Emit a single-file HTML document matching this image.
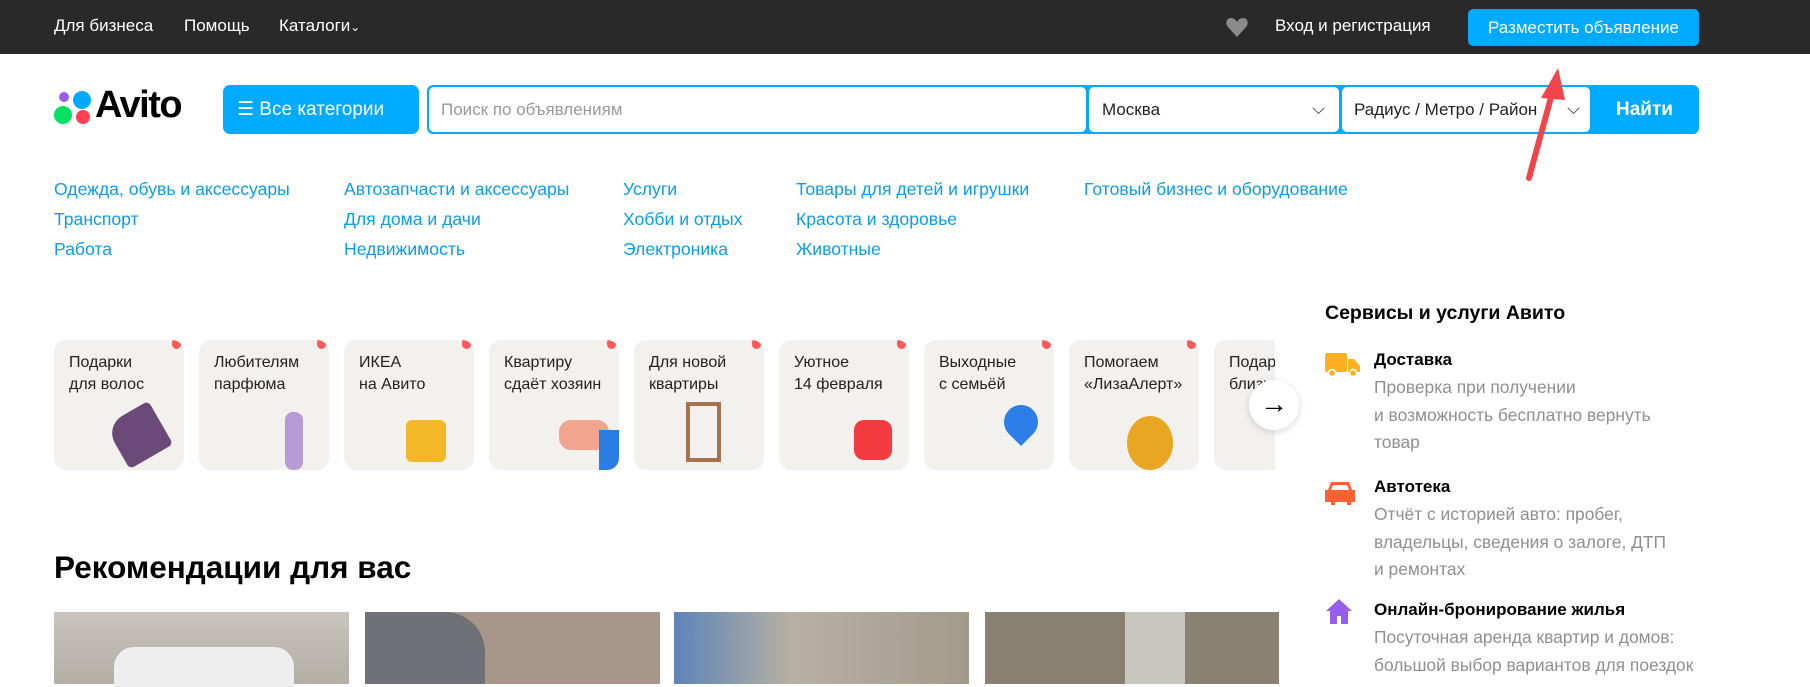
<!DOCTYPE html>
<html><head><meta charset="utf-8"><style>
*{margin:0;padding:0;box-sizing:border-box}
body{width:1810px;height:684px;overflow:hidden;background:#fff;font-family:"Liberation Sans",Arial,sans-serif;position:relative}
.a{position:absolute;white-space:nowrap}
.top{position:absolute;left:0;top:0;width:1810px;height:54px;background:#292929}
.top .a{color:#fff;font-size:17px;top:16px}
.btn{background:#00aaff;color:#fff;border-radius:5px}
.cat{color:#0a9cf0;font-size:17.6px}
.card{position:absolute;top:340px;width:130px;height:130px;background:#f2f1ee;border-radius:12px;overflow:hidden}
.card span{position:absolute;left:15px;top:12px;font-size:16px;line-height:22px;color:#222;white-space:nowrap}
.card i{position:absolute;right:3px;top:-2px;width:9px;height:11px;border-radius:5px;background:#ff5a5a}
.g{color:#8f8f8f;font-size:17.4px;line-height:27.5px}
.h{font-weight:bold;font-size:17px;color:#000}
.ph{position:absolute;top:612px;height:72px;width:295px}
</style></head><body>
<div class="top">
<div class="a" style="left:54px">Для бизнеса</div>
<div class="a" style="left:184px">Помощь</div>
<div class="a" style="left:279px">Каталоги<span style="font-size:12px">⌄</span></div>
<svg class="a" style="left:1225px;top:16px" width="24" height="22" viewBox="0 0 24 22"><path d="M12 21 3 11C0 8 1 2 6 2c3 0 5 2 6 4 1-2 3-4 6-4 5 0 6 6 3 9z" fill="#8a8a8a"/></svg>
<div class="a" style="left:1275px">Вход и регистрация</div>
<div class="a btn" style="left:1468px;top:9px;width:231px;height:37px;line-height:37px;text-align:center;font-size:17px">Разместить объявление</div>
</div>
<svg class="a" style="left:54px;top:89px" width="38" height="36"><circle cx="9" cy="26" r="9" fill="#04e061"/><circle cx="28" cy="11" r="9" fill="#0af"/><circle cx="29" cy="28" r="7" fill="#ff4053"/><circle cx="10" cy="8" r="5" fill="#965eeb"/></svg>
<div class="a" style="left:95px;top:84px;font-size:38px;font-weight:bold;letter-spacing:-1.5px;color:#000">Avito</div>
<div class="a btn" style="left:223px;top:85px;width:196px;height:49px;border-radius:7px;line-height:49px;font-size:19px;padding-left:14px">☰ Все категории</div>
<div class="a" style="left:427px;top:85px;width:1272px;height:49px;background:#00aaff;border-radius:6px"></div>
<div class="a" style="left:429px;top:87px;width:657px;height:45px;background:#fff;border-radius:5px;color:#999;font-size:17px;line-height:45px;padding-left:12px">Поиск по объявлениям</div>
<div class="a" style="left:1089px;top:87px;width:250px;height:45px;background:#fff;border-radius:5px;color:#222;font-size:17px;line-height:45px;padding-left:13px">Москва<span style="position:absolute;right:14px;top:-1px">⌵</span></div>
<div class="a" style="left:1342px;top:87px;width:248px;height:45px;background:#fff;border-radius:5px;color:#222;font-size:17px;line-height:45px;padding-left:12px;overflow:hidden">Радиус / Метро / Район<span style="position:absolute;right:10px;top:-1px;background:#fff;padding-left:4px">⌵</span></div>
<div class="a" style="left:1590px;top:85px;width:109px;height:49px;color:#fff;font-size:19px;font-weight:bold;line-height:49px;text-align:center">Найти</div>
<div class="a cat" style="left:54px;top:179px">Одежда, обувь и аксессуары</div>
<div class="a cat" style="left:54px;top:209px">Транспорт</div>
<div class="a cat" style="left:54px;top:239px">Работа</div>
<div class="a cat" style="left:344px;top:179px">Автозапчасти и аксессуары</div>
<div class="a cat" style="left:344px;top:209px">Для дома и дачи</div>
<div class="a cat" style="left:344px;top:239px">Недвижимость</div>
<div class="a cat" style="left:623px;top:179px">Услуги</div>
<div class="a cat" style="left:623px;top:209px">Хобби и отдых</div>
<div class="a cat" style="left:623px;top:239px">Электроника</div>
<div class="a cat" style="left:796px;top:179px">Товары для детей и игрушки</div>
<div class="a cat" style="left:796px;top:209px">Красота и здоровье</div>
<div class="a cat" style="left:796px;top:239px">Животные</div>
<div class="a cat" style="left:1084px;top:179px">Готовый бизнес и оборудование</div>
<svg class="a" style="left:1515px;top:60px" width="60" height="125"><path d="M14 118 L38 30" stroke="#f0464b" stroke-width="6" stroke-linecap="round"/><path d="M43 8 L26 38 L50 40 Z" fill="#f0464b"/></svg>
<div class="card" style="left:54px"><span>Подарки<br>для волос</span><i></i><div style="position:absolute;left:60px;top:70px;width:50px;height:50px;background:#6b4a7a;border-radius:20px 5px 5px 5px;transform:rotate(-30deg)"></div></div>
<div class="card" style="left:199px"><span>Любителям<br>парфюма</span><i></i><div style="position:absolute;left:86px;top:72px;width:18px;height:58px;background:#b79ad6;border-radius:8px"></div></div>
<div class="card" style="left:344px"><span>ИКЕА<br>на Авито</span><i></i><div style="position:absolute;left:62px;top:80px;width:40px;height:42px;background:#f3b727;border-radius:6px"></div></div>
<div class="card" style="left:489px"><span>Квартиру<br>сдаёт хозяин</span><i></i><div style="position:absolute;left:70px;top:80px;width:50px;height:30px;background:#f2a48e;border-radius:12px"></div><div style="position:absolute;left:110px;top:90px;width:24px;height:40px;background:#2a7de1"></div></div>
<div class="card" style="left:634px"><span>Для новой<br>квартиры</span><i></i><div style="position:absolute;left:52px;top:62px;width:35px;height:60px;border:4px solid #a57350"></div></div>
<div class="card" style="left:779px"><span>Уютное<br>14 февраля</span><i></i><div style="position:absolute;left:75px;top:80px;width:38px;height:40px;background:#f23a3f;border-radius:10px"></div></div>
<div class="card" style="left:924px"><span>Выходные<br>с семьёй</span><i></i><div style="position:absolute;left:80px;top:65px;width:34px;height:34px;background:#2d7ee8;border-radius:50% 50% 50% 0;transform:rotate(-45deg)"></div></div>
<div class="card" style="left:1069px"><span>Помогаем<br>«ЛизаАлерт»</span><i></i><div style="position:absolute;left:58px;top:76px;width:46px;height:54px;background:#e9a623;border-radius:50%"></div></div>
<div class="card" style="left:1214px"><span>Подарки<br>близким</span></div>
<div class="a" style="left:1275px;top:296px;width:535px;height:240px;background:#fff"></div>
<div class="a" style="left:1249px;top:380px;width:50px;height:50px;border-radius:50%;background:#fff;box-shadow:0 2px 8px rgba(0,0,0,.15);text-align:center;line-height:48px;font-size:28px;color:#000">→</div>
<div class="a h" style="left:1325px;top:302px;font-size:19.5px">Сервисы и услуги Авито</div>
<svg class="a" style="left:1325px;top:353px" width="36" height="24"><rect x="0" y="0" width="22" height="19" rx="2" fill="#ffb021"/><path d="M23 6h6l6 7v6H23z" fill="#ffb021"/><circle cx="7" cy="20" r="3.5" fill="#ffb021" stroke="#fff" stroke-width="1.5"/><circle cx="28" cy="20" r="3.5" fill="#ffb021" stroke="#fff" stroke-width="1.5"/></svg>
<div class="a h" style="left:1374px;top:350px">Доставка</div>
<div class="a g" style="left:1374px;top:374px">Проверка при получении<br>и возможность бесплатно вернуть<br>товар</div>
<svg class="a" style="left:1325px;top:480px" width="30" height="26"><path d="M6 2h18l3 8h3v12h-4v3h-4v-3H10v3H6v-3H0V10h3z" fill="#ff6033"/><path d="M8 5h14l2 5H6z" fill="#fff"/></svg>
<div class="a h" style="left:1374px;top:477px">Автотека</div>
<div class="a g" style="left:1374px;top:501px">Отчёт с историей авто: пробег,<br>владельцы, сведения о залоге, ДТП<br>и ремонтах</div>
<svg class="a" style="left:1325px;top:598px" width="28" height="28"><path d="M14 1 1 13h4v13h7v-8h4v8h7V13h4z" fill="#965eeb"/></svg>
<div class="a h" style="left:1374px;top:600px">Онлайн-бронирование жилья</div>
<div class="a g" style="left:1374px;top:624px">Посуточная аренда квартир и домов:<br>большой выбор вариантов для поездок</div>
<div class="a" style="left:54px;top:549px;font-size:31.5px;font-weight:bold;color:#000">Рекомендации для вас</div>
<div class="ph" style="left:54px;background:linear-gradient(#c8c4bd,#b3aea6)"><div style="position:absolute;left:60px;top:35px;width:180px;height:40px;background:#eee;border-radius:20px 20px 0 0"></div></div>
<div class="ph" style="left:365px;background:#a8968a"><div style="position:absolute;left:0;top:0;width:120px;height:72px;background:#6e7178;border-radius:0 40px 0 0"></div></div>
<div class="ph" style="left:674px;background:linear-gradient(90deg,#5d84b8,#b8b0a3 40%,#a39a8c)"></div>
<div class="ph" style="left:985px;width:294px;background:#8a8172"><div style="position:absolute;left:140px;top:0;width:60px;height:72px;background:#c9c6c0"></div></div>
</body></html>
